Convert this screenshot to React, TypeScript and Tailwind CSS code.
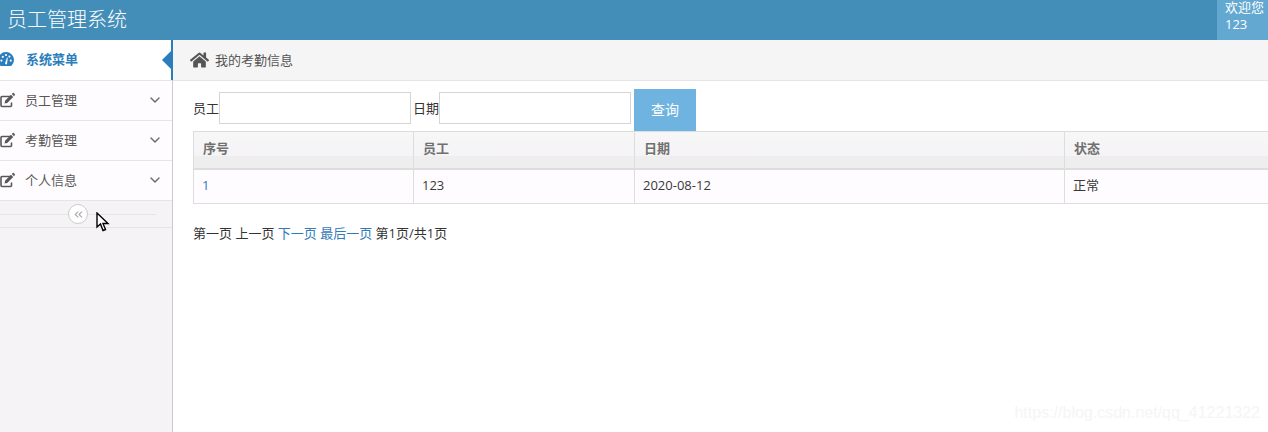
import { ChevronDown, ChevronsLeft } from "lucide-react";
import { FaHome } from "react-icons/fa";

const font = "font-['Open_Sans','Noto_Sans_CJK_SC',sans-serif]";

const GaugeIcon = () => (
  <svg className="-ml-[2px] mr-[12px] h-[15px] w-[16px] shrink-0" viewBox="0 0 16 15">
    <path d="M2.7 14 A8 8 0 1 1 13.3 14 Z" fill="#2b7dbc" />
    <g fill="white">
      <circle cx="3.4" cy="8.6" r="1.1" />
      <circle cx="4.8" cy="4.8" r="1.1" />
      <circle cx="8" cy="3" r="1.1" />
      <circle cx="11.4" cy="4.6" r="1.1" />
      <circle cx="12.8" cy="8.6" r="1.1" />
      <path d="M7 11.5 L9 5.5 L9.8 5.7 L9 12 Q8 13 7 11.5 Z" />
    </g>
  </svg>
);

const EditIcon = () => (
  <svg className="mr-[10px] h-[16px] w-[15px] shrink-0 text-[#585858]" viewBox="0 0 15 16">
    <path d="M11 4.5 H2 Q1 4.5 1 5.5 V13.5 Q1 14.5 2 14.5 H10.5 Q11.5 14.5 11.5 13.5 V10.5" fill="none" stroke="currentColor" strokeWidth="1.6" />
    <path d="M5 8.8 L11 2.8 L13.2 5 L7.2 11 L4.6 11.5 Z M11.8 2 L12.8 1 Q13.4 0.6 14 1.2 L14.7 1.9 Q15.2 2.5 14.8 3.1 L14 4.2 Z" fill="currentColor" />
  </svg>
);

const MenuItem = ({ label }: { label: string }) => (
  <div className="flex h-[40px] items-center border-b border-[#e5e5e5] bg-[#fffcff] pb-[2px] pr-[9px] text-[13px] leading-[18px] text-[#585858]">
    <EditIcon />
    <span className="flex-1">{label}</span>
    <ChevronDown className="h-[16px] w-[16px] text-[#666666]" strokeWidth={2} />
  </div>
);

const Sidebar = () => (
  <aside className="flex w-[173px] shrink-0 flex-col border-r border-[#cccccc] bg-[#f5f3f6]">
    <div className="relative flex h-[41px] items-center border-b border-[#e5e5e5] bg-white pb-[2px] text-[13px] font-bold leading-[18px] text-[#2b7dbc]">
      <GaugeIcon />
      <span>系统菜单</span>
      <span className="absolute right-[-1px] top-0 h-[40px] w-[2px] bg-[#2b7dbc]" />
      <span className="absolute right-0 top-[10px] h-0 w-0 border-y-[10px] border-r-[10px] border-y-transparent border-r-[#2b7dbc]" />
    </div>
    <MenuItem label="员工管理" />
    <MenuItem label="考勤管理" />
    <MenuItem label="个人信息" />
    <div className="relative h-[27px] border-b border-[#e5e5e5]">
      <div className="mr-[16px] mt-[13px] border-t border-[#e5e5e5]" />
      <span className="absolute left-[68px] top-[3px] flex h-[20px] w-[20px] items-center justify-center rounded-full border border-[#cccccc] bg-white text-[#aaaaaa]">
        <ChevronsLeft className="h-[13px] w-[13px]" strokeWidth={2} />
      </span>
    </div>
  </aside>
);

const Toolbar = () => (
  <div className="h-[50px] pl-[20px] pt-[8px] text-[13px] leading-[18px] text-[#333333]">
    <div className="flex h-[42px] items-start">
      <span className="mt-[10px]">员工</span>
      <div className="mt-[3px] h-[32px] w-[192px] border border-[#d5d5d5] bg-white" />
      <span className="ml-[2px] mt-[10px]">日期</span>
      <div className="mt-[3px] h-[32px] w-[192px] border border-[#d5d5d5] bg-white" />
      <button className="ml-[3px] h-[42px] w-[62px] bg-[#6fb3e0] text-[14px] text-white">查询</button>
    </div>
  </div>
);

const headers = [
  { label: "序号", width: "w-[220px]" },
  { label: "员工", width: "w-[221px]" },
  { label: "日期", width: "w-[430px]" },
  { label: "状态", width: "flex-1" },
];

const cells = [
  { text: "1", width: "w-[220px]", color: "text-[#337ab7]" },
  { text: "123", width: "w-[221px]", color: "text-[#393939]" },
  { text: "2020-08-12", width: "w-[430px]", color: "text-[#393939]" },
  { text: "正常", width: "flex-1", color: "text-[#393939]" },
];

const Table = () => (
  <div className="-mr-px ml-[20px] border-y border-l border-[#dddddd]">
    <div className="flex h-[38px] border-b-2 border-[#dddddd] bg-[linear-gradient(#f7f7f7_0,#f5f3f6_66%,#eeeeee_66%,#eeeeee_100%)]">
      {headers.map((h, i) => (
        <div
          key={h.label}
          className={`${h.width} ${i < 3 ? "border-r border-[#dddddd]" : ""} pl-[9px] pt-[7px] text-[13px] font-bold leading-[18px] text-[#707070]`}
        >
          {h.label}
        </div>
      ))}
    </div>
    <div className="flex h-[33px] bg-[#fffcff]">
      {cells.map((c, i) => (
        <div
          key={c.text}
          className={`${c.width} ${c.color} ${i < 3 ? "border-r border-[#dddddd]" : ""} pl-[8px] pt-[6px] text-[13px] leading-[18px]`}
        >
          {c.text}
        </div>
      ))}
    </div>
  </div>
);

const Pager = () => (
  <div className="ml-[20px] mt-[20px] text-[13px] leading-[18px] text-[#333333]">
    第一页 上一页 <span className="text-[#337ab7]">下一页 最后一页</span> 第1页/共1页
  </div>
);

export default function App() {
  return (
    <div className={`relative flex h-[432px] w-[1268px] flex-col overflow-hidden bg-white ${font}`}>
      <header className="flex h-[40px] shrink-0 items-center justify-between bg-[#438eb9] pl-[7px]">
        <span className="text-[20px] font-light leading-[28px] text-white">员工管理系统</span>
        <div className="flex h-[40px] w-[51px] flex-col bg-[#62a8d1] pl-[8px] text-[13px] text-white">
          <span className="leading-[14px]">欢迎您</span>
          <span className="leading-[20px]">123</span>
        </div>
      </header>
      <div className="flex flex-1">
        <Sidebar />
        <main className="flex-1">
          <div className="flex h-[41px] items-center border-b border-[#e5e5e5] bg-[#f5f5f5] pl-[17px] text-[13px] leading-[18px] text-[#555555]">
            <FaHome className="mr-[6px] h-[18px] w-[19px] text-[#555555]" />
            <span>我的考勤信息</span>
          </div>
          <Toolbar />
          <Table />
          <Pager />
        </main>
      </div>
      {/* mouse pointer captured in the screenshot */}
      <svg className="absolute left-[96px] top-[212px]" width="14" height="21" viewBox="0 0 14 21">
        <path d="M1 1 L1 15 L4.5 12 L7 18.5 L9.5 17.5 L7 11.5 L12 11.5 Z" fill="white" stroke="black" strokeWidth="1.4" />
      </svg>
      <span className="absolute bottom-[9px] right-[8px] font-['Liberation_Sans',sans-serif] text-[16px] leading-[20px] text-[#f5f5f5]">
        https://blog.csdn.net/qq_41221322
      </span>
    </div>
  );
}
